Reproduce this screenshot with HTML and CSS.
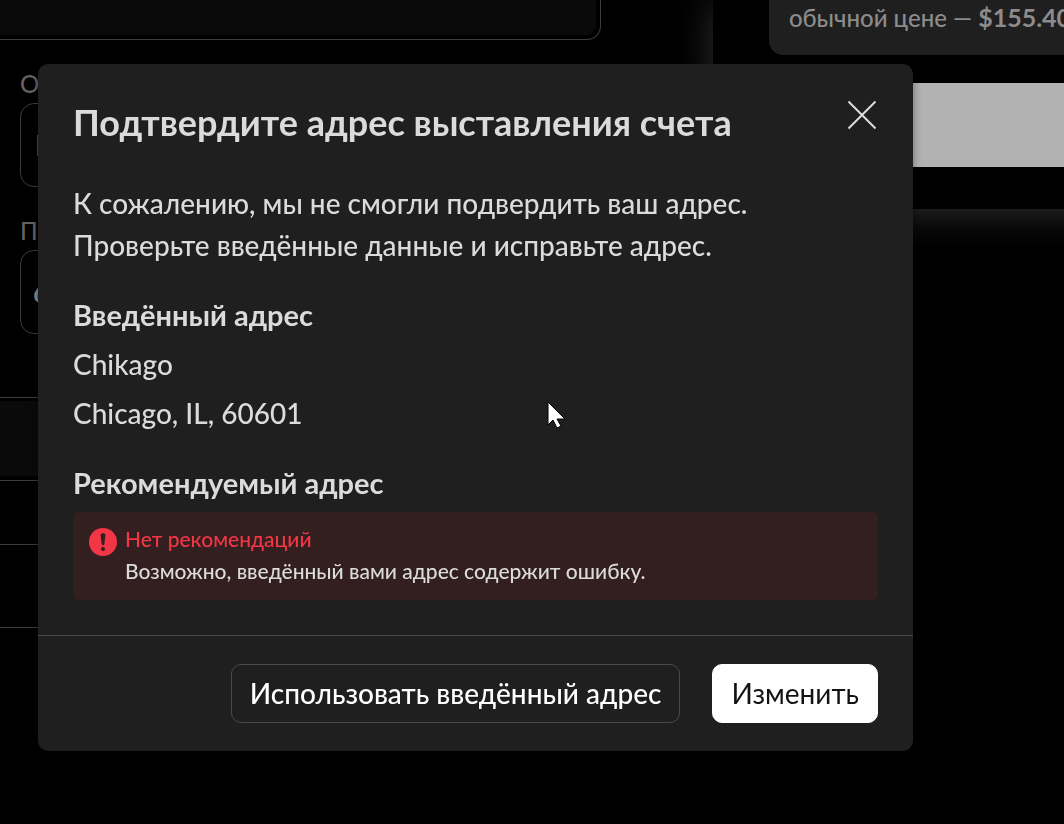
FILE: index.html
```html
<!DOCTYPE html>
<html lang="ru">
<head>
    <meta charset="UTF-8">
    <meta name="viewport" content="width=device-width, initial-scale=1.0">
    <title>Подтвердите адрес выставления счета</title>
    <link rel="stylesheet" href="styles.css">
</head>
<body>
    <main class="checkout">
        <form class="billing">
            <div class="method-box"></div>
            <div class="field">
                <label for="region">Область</label>
                <input type="text" id="region" value="IL">
            </div>
            <div class="field field-zip">
                <label for="zip">Почтовый индекс</label>
                <input type="text" id="zip" value="60601">
            </div>
            <div class="options">
                <div class="option active"></div>
                <div class="option option-small"></div>
                <div class="option"></div>
            </div>
        </form>
        <aside class="summary">
            <p class="note">обычной цене — <b>$155.40</b></p>
            <button type="button" class="pay-btn" aria-label="Оплатить"></button>
        </aside>
    </main>

    <div class="overlay">
        <section class="dialog" role="dialog" aria-modal="true" aria-labelledby="dialogTitle">
            <header class="dialog-header">
                <h1 id="dialogTitle">Подтвердите адрес выставления счета</h1>
                <button type="button" class="close-btn" aria-label="Закрыть">
                    <svg width="30" height="30" viewBox="0 0 30 30" fill="none" stroke="currentColor" stroke-width="2">
                        <path d="M1.5 1.5l27 27M28.5 1.5l-27 27"/>
                    </svg>
                </button>
            </header>
            <div class="dialog-body">
                <p>К сожалению, мы не смогли подвердить ваш адрес.<br>Проверьте введённые данные и исправьте адрес.</p>
                <div class="address">
                    <h2>Введённый адрес</h2>
                    <p>Chikago</p>
                    <p>Chicago, IL, 60601</p>
                </div>
                <div class="suggested">
                    <h2>Рекомендуемый адрес</h2>
                    <div class="alert">
                        <svg width="28" height="28" viewBox="0 0 28 28">
                            <circle cx="14" cy="14" r="14" fill="#f23645"/>
                            <path d="M11.6 7.2c0-1.4 1-2 2.4-2s2.4.6 2.4 2l-1 8.6c-.1.9-.6 1.4-1.4 1.4s-1.3-.5-1.4-1.4z" fill="#331f20"/>
                            <circle cx="14" cy="21" r="2" fill="#331f20"/>
                        </svg>
                        <div>
                            <p class="alert-title">Нет рекомендаций</p>
                            <p>Возможно, введённый вами адрес содержит ошибку.</p>
                        </div>
                    </div>
                </div>
            </div>
            <footer class="dialog-footer">
                <button type="button" class="btn">Использовать введённый адрес</button>
                <button type="button" class="btn btn-primary">Изменить</button>
            </footer>
        </section>
    </div>

    <svg class="cursor" width="19" height="28" viewBox="0 0 19 28">
        <path d="M1 1v23l5-5 4 8 4-2-4-7h8z" fill="#fff" stroke="#000"/>
    </svg>
</body>
</html>
```

FILE: styles.css
```css
:root {
    --surface: #1f1f1f;
    --line: #4a4a4a;
    --text: #dbdbdb;
    --muted: #636363;
    --red: #f23645;
}

* {
    margin: 0;
    padding: 0;
    box-sizing: border-box;
}

body {
    font-family: 'Trebuchet MS', Lato, sans-serif;
    font-size: 28px;
    font-weight: 500;
    line-height: 42px;
    background: #000;
    color: var(--text);
    min-height: 100vh;
    overflow: hidden;
}

button,
input {
    font: inherit;
}

/* Checkout page under the dialog */
.checkout {
    display: grid;
    grid-template-columns: minmax(0, 67fr) minmax(0, 33fr);
    align-items: start;
    overflow: hidden;
}

.method-box {
    height: 40px;
    margin-right: 112px;
    padding: 0 4px 4px 0;
    border: 1px solid #3d3d3d;
    border-width: 0 1px 1px 0;
    border-radius: 0 0 14px 0;
}

.method-box::before {
    content: '';
    display: block;
    height: 100%;
    background: #0a0a0a;
    border-radius: 0 0 10px 0;
}

.field {
    display: flex;
    flex-direction: column;
    margin: 28px 112px 0 20px;
}

.field label {
    font-size: 24px;
    line-height: 32px;
    color: var(--muted);
    margin-bottom: 3px;
}

.field input {
    height: 84px;
    padding: 0 14px;
    background: none;
    border: 1px solid #3d3d3d;
    border-radius: 14px;
    color: #8c8c8c;
}

.field-zip input {
    padding: 0 12px;
    font-weight: bold;
}

.options {
    margin: 63px 112px 0 0;
    border-bottom: 1px solid #3d3d3d;
}

.option {
    height: 83px;
    border-top: 1px solid #3d3d3d;
    padding: 3px 0 4px;
}

.option-small {
    height: 64px;
}

.option.active::before {
    content: '';
    display: block;
    height: 100%;
    background: #0a0a0a;
}

/* The panel runs past the right edge of the window */
.summary {
    height: 209px;
    margin-right: -60px;
    padding-left: 56px;
    background: #000;
    box-shadow: 0 4px 36px #303030;
}

.note {
    height: 55px;
    padding: 0 20px;
    background: var(--surface);
    border-radius: 0 0 0 14px;
    color: #8c8c8c;
    font-size: 24px;
    line-height: 34px;
    white-space: nowrap;
}

.note b {
    font-size: 25px;
}

.pay-btn {
    display: block;
    width: 100%;
    height: 84px;
    margin-top: 28px;
    background: #b2b2b2;
    border: none;
}

/* Dialog */
.overlay {
    position: fixed;
    inset: 0;
    padding: 64px 151px 0 38px;
}

.dialog {
    background: var(--surface);
    border-radius: 10px;
    box-shadow: 0 4px 8px rgba(0, 0, 0, 0.4);
}

.dialog-header {
    display: flex;
    justify-content: space-between;
    align-items: flex-start;
    padding: 34px 35px 0;
}

h1 {
    font-size: 36px;
    line-height: 48px;
    font-weight: bold;
}

h2 {
    font-size: 29px;
    line-height: 42px;
    font-weight: bold;
}

.close-btn {
    display: flex;
    padding: 2px 1px;
    background: none;
    border: none;
    color: var(--text);
    cursor: pointer;
}

.dialog-body {
    display: flex;
    flex-direction: column;
    gap: 28px;
    padding: 36px 35px 35px;
}

.address {
    display: flex;
    flex-direction: column;
    gap: 7px;
}

.alert {
    display: flex;
    gap: 8px;
    margin-top: 8px;
    padding: 11px 16px 13px;
    background: #331f20;
    border-radius: 7px;
    font-size: 21px;
    line-height: 32px;
}

.alert svg {
    flex: none;
    margin-top: 5px;
}

.alert-title {
    color: var(--red);
}

.dialog-footer {
    display: flex;
    justify-content: flex-end;
    gap: 32px;
    padding: 28px 35px;
    border-top: 1px solid var(--line);
}

.btn {
    height: 59px;
    padding: 0 18px 2px;
    background: none;
    border: 1px solid var(--line);
    border-radius: 10px;
    color: #fff;
    cursor: pointer;
}

.btn-primary {
    background: #fff;
    border-color: #fff;
    color: #131313;
    font-weight: normal;
}

.cursor {
    position: absolute;
    left: 547px;
    top: 401px;
}
```
